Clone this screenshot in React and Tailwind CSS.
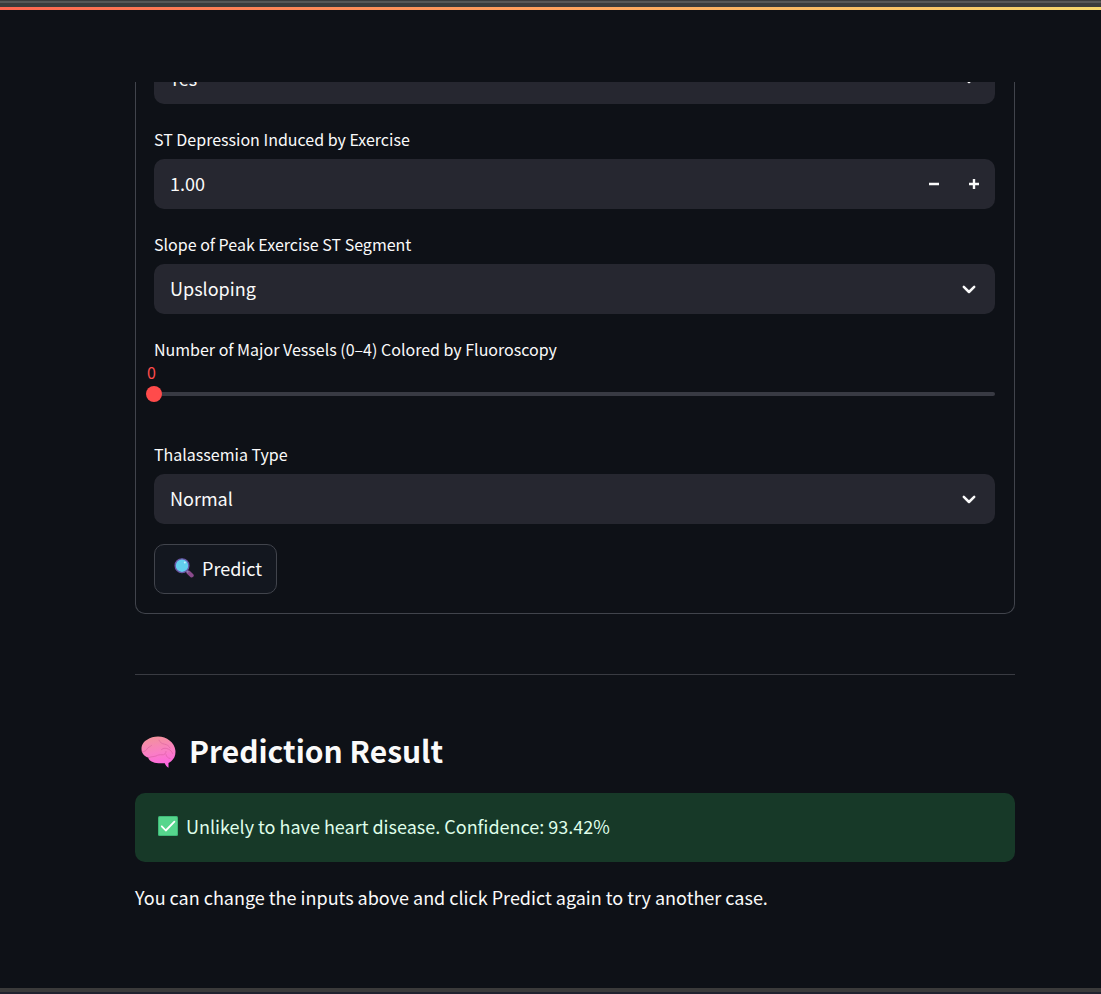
import { useState } from "react";

function Chevron() {
  return (
    <svg className="pointer-events-none absolute right-4 top-1/2 size-5 -translate-y-1/2" viewBox="0 0 20 20" fill="none" stroke="#fafafa" strokeWidth="2.5" strokeLinecap="round" strokeLinejoin="round" aria-hidden="true">
      <path d="M4.800 7.800 10 13l5.200-5.200" />
    </svg>
  );
}

function SelectBox({ id, options, label }) {
  return (
    <div className="relative w-full shrink-0">
      <select id={id} aria-label={label} className="block h-[50px] w-full appearance-none rounded-[10px] bg-[#262730] px-4 pb-[2px] text-lg leading-7 text-[#fafafa] outline-none">
        {options.map((o) => (
          <option key={o}>{o}</option>
        ))}
      </select>
      <Chevron />
    </div>
  );
}

function Field({ id, label, children }) {
  return (
    <div className="flex flex-col">
      <label htmlFor={id} className="mb-[5px] text-base leading-[30px]">
        {label}
      </label>
      {children}
    </div>
  );
}

function Magnifier() {
  return (
    <svg className="size-5" viewBox="0 0 20 20" aria-hidden="true">
      <path d="m14.300 14.300 3.400 3.200" stroke="#8b4a8c" strokeWidth="4" strokeLinecap="round" />
      <path d="m12.200 12.400 2 2" stroke="#8f7fae" strokeWidth="2" />
      <circle cx="8" cy="7.700" r="6.900" fill="#62cfee" stroke="#6c58a8" strokeWidth="1.300" />
      <circle cx="10.800" cy="4.500" r="1" fill="#c9f3ff" />
    </svg>
  );
}

function Brain() {
  return (
    <svg className="h-8 w-[35px]" viewBox="0 0 35 32" aria-hidden="true">
      <defs>
        <linearGradient id="brain" x1="0.400" y1="0" x2="0.600" y2="1">
          <stop offset="0" stopColor="#f3929c" />
          <stop offset="0.500" stopColor="#fa7fc4" />
          <stop offset="1" stopColor="#ff62e4" />
        </linearGradient>
      </defs>
      <path fill="url(#brain)" d="M.5 13C.5 8.500 3 5 6.500 3.500 9 1.500 13 .4 17 .4c4.500 0 8.500 1.400 11.500 4 3.500 2.500 5.500 6 5.900 10.100.4 4.700-1 8.200-4.200 10.700-.9.900-1.900 1.500-2.700 1.800V31.700c-1.500-.7-3-2.400-3.700-4.500-4 .3-9 .3-12-1.200-2.500-.8-4.200-2.500-4.500-4.500C4 20.900.5 17.500.5 13Z" />
      <g fill="none" stroke="#cf5595" strokeWidth="1" strokeLinecap="round" strokeLinejoin="round" opacity="0.450">
        <path d="M1 15.500c2 .6 4-.5 5-2.500 1-1.800 3-2 4.500-3.500" />
        <path d="M7.500 21.800c2-1.500 5-.8 7.500-1.800 2-1 3.500-1.500 6-1.200 2.500.2 4-1.300 4-3.300" />
        <path d="M18 4.200c1 2.300 3 3.500 5.500 4 2.500.4 4.500 1.600 5.500 3.800" />
        <path d="M20.500 13.500c2-1.800 5-1.500 7-.3 2 1 3.500 2.300 4 4.300" />
        <path d="M25 18.500c.4 2.300 2 3.800 4 4" />
      </g>
    </svg>
  );
}

function CheckMark() {
  return (
    <svg className="size-5" viewBox="0 0 20 20" aria-hidden="true">
      <rect width="20" height="20" rx="1.500" fill="#3fb978" />
      <rect x="1" y="1" width="18" height="18" rx="1" fill="#56d68d" />
      <path d="m3.800 10.300 4 4.200 8.600-8.900" fill="none" stroke="#fff" strokeWidth="1.800" strokeLinecap="round" strokeLinejoin="round" />
    </svg>
  );
}

export default function App() {
  const [depression, setDepression] = useState(1);
  const [vessels, setVessels] = useState(0);

  return (
    <div className="flex min-h-screen flex-col bg-[#0e1117] font-['Noto_Sans_CJK_SC','Source_Sans_Pro',sans-serif] text-[#fafafa]">
      <div className="h-[7px] border-t border-[#3c3c3c] bg-[#3c3c3c]">
        <div className="h-[2px] bg-[#575757]" />
      </div>
      <div className="h-[3px] bg-linear-to-r from-[#ff6650] to-[#f5d66c]" />

      <main className="grow pt-[72px] pr-[86px] pl-[135px]">
        <form className="flex flex-col gap-5 rounded-b-[10px] border-x border-b border-[#41444c] pr-[19px] pb-[19px] pl-[18px]" onSubmit={(e) => e.preventDefault()}>
          <div className="flex h-[22px] items-end overflow-hidden">
            <SelectBox id="angina" label="Exercise Induced Angina" options={["Yes", "No"]} />
          </div>

          <Field id="depression" label="ST Depression Induced by Exercise">
            <div className="flex h-[50px] overflow-hidden rounded-[10px] bg-[#262730] pr-px">
              <input id="depression" className="min-w-0 grow bg-transparent px-4 pb-[2px] text-lg leading-7 outline-none" inputMode="decimal" value={depression.toFixed(2)} onChange={(e) => setDepression(Number(e.target.value) || 0)} />
              <button type="button" aria-label="Decrease" className="flex w-10 items-center justify-center" onClick={() => setDepression(Math.max(0, depression - 0.1))}>
                <svg className="size-[10px]" viewBox="0 0 10 10" aria-hidden="true">
                  <path d="M0 5h10" stroke="#fafafa" strokeWidth="2.400" />
                </svg>
              </button>
              <button type="button" aria-label="Increase" className="flex w-10 items-center justify-center" onClick={() => setDepression(depression + 0.1)}>
                <svg className="size-[10px]" viewBox="0 0 10 10" aria-hidden="true">
                  <path d="M0 5h10M5 0v10" stroke="#fafafa" strokeWidth="2.400" />
                </svg>
              </button>
            </div>
          </Field>

          <Field id="slope" label="Slope of Peak Exercise ST Segment">
            <SelectBox id="slope" options={["Upsloping", "Flat", "Downsloping"]} />
          </Field>

          <div className="flex flex-col">
            <label htmlFor="vessels" className="text-base leading-[30px]">
              Number of Major Vessels (0–4) Colored by Fluoroscopy
            </label>
            <output htmlFor="vessels" className="-ml-[7px] text-base leading-4 text-[#ff4b4b]">
              {vessels}
            </output>
            <div className="relative mb-[11px] flex h-7 items-center">
              <div className="h-1 w-full rounded-full bg-[#383a43]" />
              <input
                id="vessels"
                type="range"
                min="0"
                max="4"
                value={vessels}
                onChange={(e) => setVessels(Number(e.target.value))}
                className="absolute inset-y-0 -left-2 w-[calc(100%+16px)] appearance-none bg-transparent outline-none [&::-webkit-slider-thumb]:size-4 [&::-webkit-slider-thumb]:appearance-none [&::-webkit-slider-thumb]:rounded-full [&::-webkit-slider-thumb]:bg-[#ff4b4b]"
              />
            </div>
          </div>

          <Field id="thal" label="Thalassemia Type">
            <SelectBox id="thal" options={["Normal", "Fixed Defect", "Reversible Defect"]} />
          </Field>

          <button type="submit" className="flex h-[50px] items-center gap-2 self-start rounded-[10px] border border-[#41444c] bg-[#13171f] pr-[14px] pb-[2px] pl-[19px] text-lg leading-7">
            <Magnifier />
            Predict
          </button>
        </form>

        <hr className="mt-[60px] border-[#393b42]" />

        <h3 className="mt-[52px] flex h-[50px] items-center gap-[13px] pl-[6px] text-[30px] leading-[46px] font-bold">
          <Brain />
          <span className="pb-1">Prediction Result</span>
        </h3>

        <div role="alert" className="mt-4 flex h-[69px] items-center gap-2 rounded-[10px] bg-[#173928] px-[23px] pb-1 text-lg leading-7 text-[#dffde9]">
          <CheckMark />
          Unlikely to have heart disease. Confidence: 93.42%
        </div>

        <p className="mt-5 text-lg leading-[30px]">You can change the inputs above and click Predict again to try another case.</p>
      </main>

      <div className="h-[6px] border-b-2 border-[#20222f] bg-[#3a3a3a]" />
    </div>
  );
}
